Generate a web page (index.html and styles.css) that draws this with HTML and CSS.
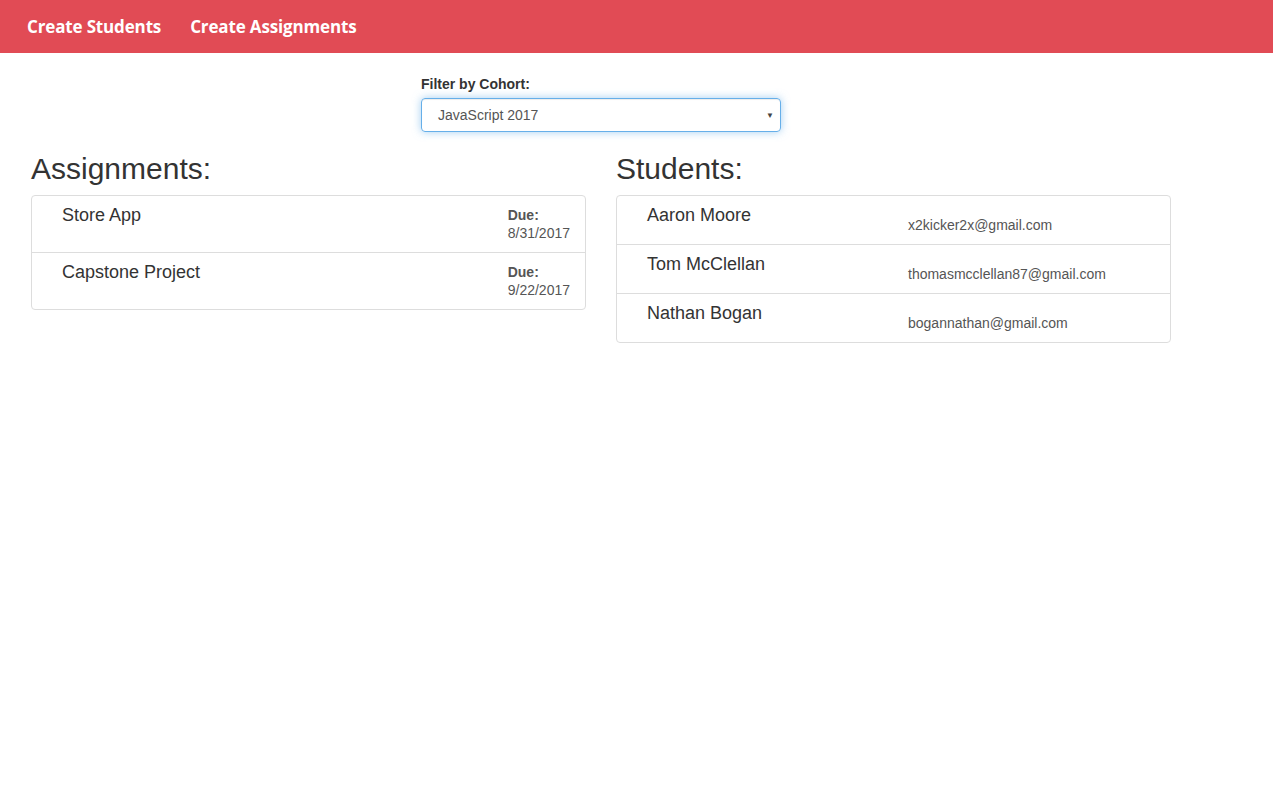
FILE: index.html
```html
<!DOCTYPE html>
<html>
<head>
<meta charset="utf-8">
<link rel="stylesheet" href="styles.css">
</head>
<body>
<nav class="navbar">
  <a class="nav-link" href="#">Create Students</a>
  <a class="nav-link" href="#">Create Assignments</a>
</nav>
<main class="container">
  <div class="filter">
    <label class="filter-label">Filter by Cohort:</label>
    <div class="select">
      <span class="select-value">JavaScript 2017</span>
      <span class="select-arrow">▼</span>
    </div>
  </div>
  <div class="columns">
    <section class="col">
      <h2 class="heading">Assignments:</h2>
      <ul class="list">
        <li class="item assignment">
          <span class="title">Store App</span>
          <span class="due"><b>Due:</b><span>8/31/2017</span></span>
        </li>
        <li class="item assignment">
          <span class="title">Capstone Project</span>
          <span class="due"><b>Due:</b><span>9/22/2017</span></span>
        </li>
      </ul>
    </section>
    <section class="col">
      <h2 class="heading">Students:</h2>
      <ul class="list">
        <li class="item student">
          <span class="title">Aaron Moore</span>
          <span class="email">x2kicker2x@gmail.com</span>
        </li>
        <li class="item student">
          <span class="title">Tom McClellan</span>
          <span class="email">thomasmcclellan87@gmail.com</span>
        </li>
        <li class="item student">
          <span class="title">Nathan Bogan</span>
          <span class="email">bogannathan@gmail.com</span>
        </li>
      </ul>
    </section>
  </div>
</main>
</body>
</html>
```
FILE: styles.css
```css
* { box-sizing: border-box; }
html, body { margin: 0; padding: 0; }
body {
  font-family: "Liberation Sans", Arial, sans-serif;
  color: #333;
  background: #fff;
}
.navbar {
  height: 53px;
  background: #e14b55;
  display: flex;
  align-items: center;
  padding-left: 27px;
  gap: 29px;
}
.nav-link {
  color: #fff;
  text-decoration: none;
  font-family: "Open Sans", sans-serif;
  font-weight: 700;
  font-size: 17px;
  letter-spacing: -0.15px;
  padding-bottom: 1px;
}
.container {
  width: 1170px;
  margin-left: 16px;
  padding: 0 15px;
}
.filter {
  width: 360px;
  margin: 23px auto 0;
}
.filter-label {
  display: block;
  font-weight: 700;
  font-size: 14px;
  line-height: 16px;
  margin-bottom: 6px;
}
.select {
  height: 34px;
  border: 1px solid #66afe9;
  border-radius: 4px;
  box-shadow: inset 0 1px 1px rgba(0,0,0,.075), 0 0 8px rgba(102,175,233,.6);
  display: flex;
  align-items: center;
  justify-content: space-between;
  padding: 0 6px 0 16px;
  font-size: 14px;
  color: #555;
}
.select-arrow { font-size: 8px; color: #444; }
.columns {
  display: grid;
  grid-template-columns: 555px 555px;
  gap: 30px;
  margin-top: 19px;
}
.heading {
  font-size: 30px;
  font-weight: 400;
  margin: 0 0 9px;
  line-height: 35px;
  color: #333;
}
.list {
  list-style: none;
  margin: 0;
  padding: 0;
  border: 1px solid #ddd;
  border-radius: 4px;
}
.item {
  border-top: 1px solid #ddd;
  display: flex;
}
.item:first-child { border-top: 0; }
.title { font-size: 18px; line-height: 20px; }
.assignment {
  height: 57px;
  justify-content: space-between;
  padding: 9px 15px 0 30px;
}
.assignment:first-child { height: 56px; }
.due {
  display: flex;
  flex-direction: column;
  font-size: 14px;
  line-height: 18px;
  color: #555;
  padding-top: 1px;
}
.student {
  height: 49px;
  padding: 9px 15px 0 30px;
}
.student:first-child { height: 48px; }
.student .title { width: 261px; flex: none; }
.email {
  font-size: 14px;
  line-height: 18px;
  color: #555;
  padding-top: 11px;
}
```
